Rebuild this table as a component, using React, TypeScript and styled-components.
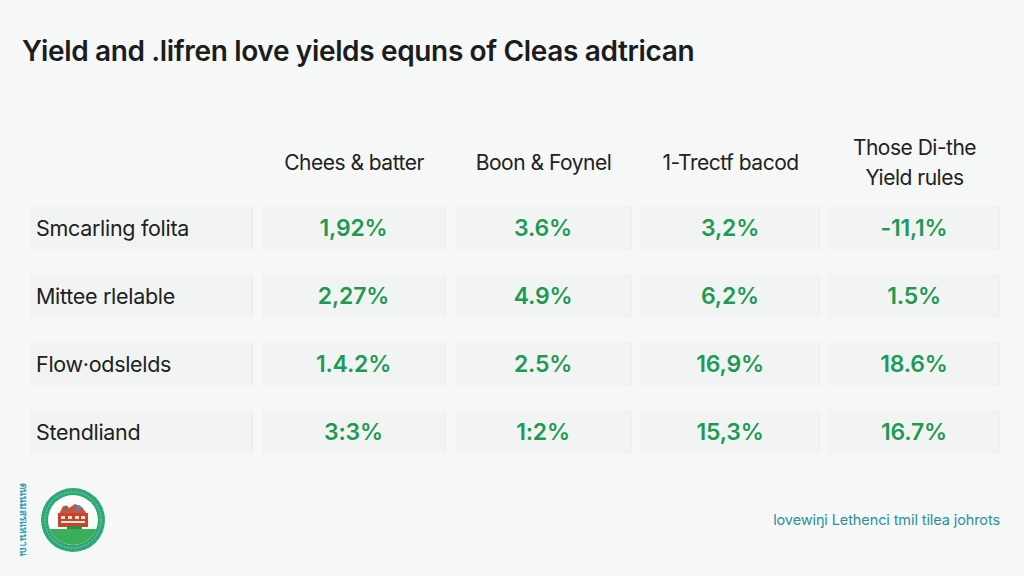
import React from "react";
import styled, { createGlobalStyle } from "styled-components";

const GlobalStyle = createGlobalStyle`
   html, body {
      margin: 0;
      padding: 0;
      background: #f6f8f7;
   }
   body {
      font-family: Inter, "Liberation Sans", Arial, sans-serif;
      color: #1e1f1f;
   }
`;

interface Row {
   label: string;
   values: string[];
}

const headers: string[][] = [
   ["Chees & batter"],
   ["Boon & Foynel"],
   ["1-Trectf bacod"],
   ["Those Di-the", "Yield rules"],
];

const rows: Row[] = [
   { label: "Smcarling folita", values: ["1,92%", "3.6%", "3,2%", "-11,1%"] },
   { label: "Mittee rlelable", values: ["2,27%", "4.9%", "6,2%", "1.5%"] },
   { label: "Flow·odslelds", values: ["1.4.2%", "2.5%", "16,9%", "18.6%"] },
   { label: "Stendliand", values: ["3:3%", "1:2%", "15,3%", "16.7%"] },
];

const SchoolBadge = () => (
   <svg width="66" height="66" viewBox="0 0 66 66">
      <circle cx="33" cy="33" r="32" fill="#2fa878" />
      <circle cx="33" cy="33" r="28" fill="none" stroke="#8fd6b8" strokeWidth="1" strokeDasharray="1.5 1.5" />
      <circle cx="33" cy="33" r="25" fill="#fbfbf9" />
      <path d="M19 27 L23 19 L29 21 L35 17 L42 20 L47 27 Z" fill="#c9553f" />
      <circle cx="38" cy="21" r="3" fill="#6b7f9a" />
      <circle cx="26" cy="21" r="2.5" fill="#8a6a55" />
      <rect x="18" y="26" width="30" height="14" fill="#c8432e" />
      <rect x="21" y="29" width="4" height="3" fill="#f3e3d0" />
      <rect x="28" y="29" width="4" height="3" fill="#f3e3d0" />
      <rect x="35" y="29" width="4" height="3" fill="#f3e3d0" />
      <rect x="41" y="29" width="4" height="3" fill="#f3e3d0" />
      <rect x="21" y="34" width="24" height="2" fill="#eee7d8" />
      <path d="M9.7 42 L56.3 42 A25 25 0 0 1 9.7 42 Z" fill="#3cae5a" />
      <rect x="27" y="39" width="15" height="3" fill="#2d8f46" />
   </svg>
);

const App = () => {
   return (
      <Page>
         <GlobalStyle />
         <Title>Yield and .lifren love yields equns of Cleas adtrican</Title>
         <Table>
            <HeaderRow>
               <HeaderSpacer />
               {headers.map((lines, i) => (
                  <HeaderCell key={i}>
                     {lines.map((line) => (
                        <span key={line}>{line}</span>
                     ))}
                  </HeaderCell>
               ))}
            </HeaderRow>
            <Body>
               {rows.map((row) => (
                  <DataRow key={row.label}>
                     <LabelCell>{row.label}</LabelCell>
                     {row.values.map((v, i) => (
                        <ValueCell key={i}>{v}</ValueCell>
                     ))}
                  </DataRow>
               ))}
            </Body>
         </Table>
         <Footer>
            <BadgeGroup>
               <VerticalText>ดนนมสรแหนาณ</VerticalText>
               <SchoolBadge />
            </BadgeGroup>
            <FooterNote>lovewiŋi Lethenci tmil tilea johrots</FooterNote>
         </Footer>
      </Page>
   );
};

const Page = styled.div`
   width: 1024px;
   height: 576px;
   box-sizing: border-box;
   padding: 34px 24px 0 22px;
   overflow: hidden;
`;

const Title = styled.h1`
   margin: 0;
   font-size: 28px;
   line-height: 34px;
   font-weight: 600;
   letter-spacing: -0.35px;
   color: #1b1c1c;
`;

const Table = styled.div`
   margin: 60px 0 0 8px;
   width: 970px;
`;

const columns = `223px 184px 177px 179px 171px`;

const HeaderRow = styled.div`
   display: grid;
   grid-template-columns: ${columns};
   column-gap: 9px;
   height: 70px;
`;

const HeaderSpacer = styled.div``;

const HeaderCell = styled.div`
   display: flex;
   flex-direction: column;
   align-items: center;
   justify-content: center;
   font-size: 21px;
   line-height: 30px;
   color: #222;
   letter-spacing: -0.5px;
`;

const Body = styled.div`
   margin-top: 8px;
   display: flex;
   flex-direction: column;
   gap: 24px;
`;

const DataRow = styled.div`
   display: grid;
   grid-template-columns: ${columns};
   column-gap: 9px;
   height: 44px;
`;

const LabelCell = styled.div`
   display: flex;
   align-items: center;
   padding-left: 6px;
   background: #f2f4f3;
   border-right: 2px solid #ecefed;
   font-size: 21.5px;
   color: #202121;
   letter-spacing: -0.3px;
`;

const ValueCell = styled.div`
   display: flex;
   align-items: center;
   justify-content: center;
   background: #f2f4f3;
   border-right: 1px solid #ecefed;
   font-size: 23px;
   font-weight: 600;
   color: #1f9a55;
   letter-spacing: -0.2px;
`;

const Footer = styled.div`
   margin-top: 29px;
   display: flex;
   align-items: center;
   justify-content: space-between;
`;

const BadgeGroup = styled.div`
   display: flex;
   align-items: center;
   gap: 8px;
   margin-left: -5px;
`;

const VerticalText = styled.div`
   writing-mode: vertical-rl;
   white-space: nowrap;
   font-size: 10px;
   font-weight: 600;
   color: #3a9cb8;
   font-family: "Noto Sans", "DejaVu Sans", sans-serif;
`;

const FooterNote = styled.div`
   font-size: 14.5px;
   color: #2a8f9c;
   letter-spacing: -0.1px;
`;

export default App;
